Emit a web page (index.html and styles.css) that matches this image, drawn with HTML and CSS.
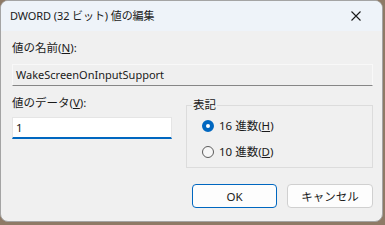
FILE: index.html
```html
<!DOCTYPE html>
<html lang="ja">
<head>
<meta charset="utf-8">
<link rel="stylesheet" href="styles.css">
</head>
<body>
<div class="window">
  <div class="titlebar">
    <span class="title">DWORD (32 ビット) 値の編集</span>
    <svg class="close" width="10" height="10" viewBox="0 0 10 10"><path d="M0.5 0.5 L9.5 9.5 M9.5 0.5 L0.5 9.5" stroke="#1a1a1a" stroke-width="1.1" fill="none"/></svg>
  </div>
  <div class="content">
    <div class="label">値の名前(<u>N</u>):</div>
    <div class="field readonly">WakeScreenOnInputSupport</div>
    <div class="row">
      <div class="col-left">
        <div class="label">値のデータ(<u>V</u>):</div>
        <div class="field edit">1</div>
      </div>
      <fieldset class="group">
        <legend>表記</legend>
        <div class="radio"><span class="dot on"></span><span>16 進数(<u>H</u>)</span></div>
        <div class="radio"><span class="dot"></span><span>10 進数(<u>D</u>)</span></div>
      </fieldset>
    </div>
    <div class="buttons">
      <button class="btn primary">OK</button>
      <button class="btn">キャンセル</button>
    </div>
  </div>
</div>
</body>
</html>
```

FILE: styles.css
```css
* { box-sizing: border-box; }
html, body { margin: 0; padding: 0; }
body {
  width: 385px;
  height: 225px;
  background: #8e7a66;
  font-family: "Noto Sans", "Noto Sans CJK JP", sans-serif;
  font-size: 11.5px;
  color: #1a1a1a;
  overflow: hidden;
}
.window {
  width: 383px;
  height: 222px;
  background: #f0f0f0;
  border: 1px solid #a4a4a4;
  border-radius: 8px;
  overflow: hidden;
  display: flex;
  flex-direction: column;
}
.titlebar {
  height: 30px;
  background: #eef3f9;
  display: flex;
  align-items: center;
  justify-content: space-between;
  padding: 0 21px 0 9px;
}
.title { line-height: 16px; font-size: 11px; letter-spacing: -0.1px; }
.close { display: block; }
.content {
  padding: 9px 9px 0 11px;
  display: flex;
  flex-direction: column;
}
.label { line-height: 16px; height: 16px; }
.field {
  height: 22px;
  line-height: 20px;
  padding: 0 3px;
}
.readonly {
  margin-top: 8px;
  background: #efefef;
  border: 1px solid #f8f8f8;
  border-bottom: 1px solid #868686;
  font-size: 11px;
}
.row {
  margin-top: 9px;
  display: flex;
  gap: 14px;
}
.col-left { width: 160px; display: flex; flex-direction: column; }
.edit {
  margin-top: 6px;
  background: #ffffff;
  border: 1px solid #e5e5e5;
  border-bottom: 2px solid #0067c0;
  line-height: 19px;
}
.group {
  margin: 2px 0 0 0;
  width: 187px;
  height: 71px;
  border: 1px solid #dcdcdc;
  padding: 5px 0 0 15px;
}
.group legend {
  margin-left: -10px;
  padding: 0 1px;
  line-height: 16px;
}
.radio {
  display: flex;
  align-items: center;
  gap: 5px;
  height: 16px;
  line-height: 16px;
}
.radio + .radio { margin-top: 10px; }
.dot {
  width: 12px;
  height: 12px;
  border-radius: 50%;
  border: 1px solid #5c5c5c;
  background: #f7f7f7;
}
.dot.on {
  border: 4px solid #0067c0;
  background: #ffffff;
}
.buttons {
  margin-top: 16px;
  display: flex;
  justify-content: flex-end;
  gap: 10px;
}
.btn {
  height: 24px;
  width: 86px;
  font: inherit;
  color: #1a1a1a;
  background: #fdfdfd;
  border: 1px solid #d0d0d0;
  border-radius: 4px;
  padding: 0;
}
.btn.primary {
  width: 85px;
  border-color: #0067c0;
}
```
